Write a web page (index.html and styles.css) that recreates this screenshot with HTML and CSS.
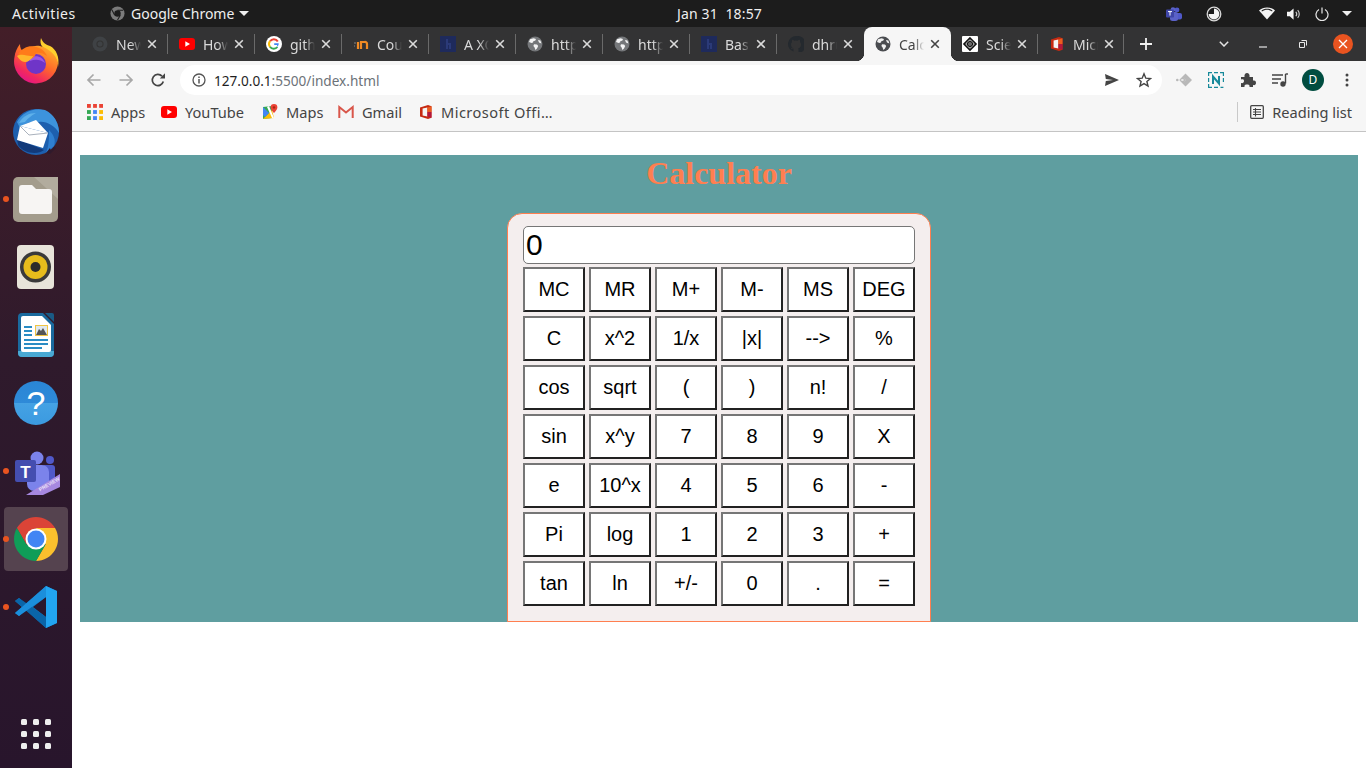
FILE: index.html
```html
<!DOCTYPE html>
<html lang="en">
<head>
<meta charset="utf-8">
<title>Calculator</title>
<link rel="stylesheet" href="styles.css">
</head>
<body>
<svg class="defs" width="0" height="0" aria-hidden="true">
  <defs>
    <symbol id="chrome" viewBox="0 0 48 48">
      <path fill="#db4437" d="M43.05 13A22 22 0 0 0 4.95 13L14.47 29.5 24 13Z"/>
      <path fill="#fbc02d" d="M24 46A22 22 0 0 0 43.05 13H24L33.53 29.5Z"/>
      <path fill="#0f9d58" d="M4.95 13A22 22 0 0 0 24 46L33.53 29.5H14.47Z"/>
      <circle cx="24" cy="24" r="10.5" fill="#fff"/>
      <circle cx="24" cy="24" r="8.5" fill="#4285f4"/>
    </symbol>
    <symbol id="globe" viewBox="0 0 16 16">
      <circle cx="8" cy="8" r="7.5" fill="currentColor"/>
      <path fill="#fff" fill-opacity=".92" d="M3 3.2 6.5 2.2 9 3 8.2 4.8 6.5 5 6 6.5 4.5 7 2 6ZM7 8.2 10 8.6 11.2 10 10 12.5 8.4 14 7.6 11.6 6.4 10ZM11 4 13.4 4.4 14.4 7.4 12 6.6Z"/>
    </symbol>
    <symbol id="yt" viewBox="0 0 16 12">
      <rect width="16" height="12" rx="3" fill="#f00"/>
      <path fill="#fff" d="M6.3 3.3 11 6 6.3 8.7Z"/>
    </symbol>
    <symbol id="office" viewBox="0 0 16 16">
      <path fill="#c62a12" d="M2 3.5 10 1 13.5 2.2V13.8L10 15 2 12.5Z"/>
      <path fill="#f5f5f5" d="M4.6 4.6 9.4 3.4V12.6L4.6 11.4Z"/>
      <path fill="#eb5c1f" d="M9.4 3.4 13.5 2.2V8H9.4Z"/>
      <path fill="#b3173c" d="M9.4 8H13.5V13.8L9.4 12.6Z"/>
    </symbol>
    <symbol id="hlogo" viewBox="0 0 16 16">
      <rect width="16" height="16" fill="#1e2a5c"/>
      <path fill="#2b3a78" d="M6 3H8V7H11V13H9V9H8V13H6Z"/>
    </symbol>
    <symbol id="x" viewBox="0 0 10 10">
      <path d="M1.2 1.2 8.8 8.8M8.8 1.2 1.2 8.8" fill="none" stroke="currentColor" stroke-width="1.6"/>
    </symbol>
  </defs>
</svg>

<header class="topbar">
  <div class="top-left">
    <span class="activities">Activities</span>
    <span class="app">
      <svg class="app-ico" viewBox="0 0 16 16"><circle cx="8" cy="8" r="7.5" fill="#7b7b7b"/><circle cx="8" cy="8" r="3.4" fill="#1c1c1c"/><path d="M8 4.6H14M5 9.8 2 4M11 9.8 8 15" stroke="#1c1c1c" stroke-width="1.1"/></svg>
      Google Chrome
      <i class="caret"></i>
    </span>
  </div>
  <div class="clock">Jan 31&nbsp;&nbsp;18:57</div>
  <div class="tray">
    <svg class="t-teams" viewBox="0 0 16 14"><circle cx="11" cy="3" r="2.4" fill="#5059c9"/><rect x="7" y="6" width="9" height="6.5" rx="2" fill="#5059c9"/><circle cx="7" cy="2.6" r="2.4" fill="#5b62c8"/><rect x="4" y="5" width="8" height="9" rx="2.5" fill="#5b62c8"/><rect y="2.5" width="8" height="8" rx="1" fill="#3f46a8"/><path d="M2 4.6H6M4 4.6V8.6" stroke="#fff"/></svg>
    <svg class="t-night" viewBox="0 0 16 16"><circle cx="8" cy="8" r="6.8" fill="none" stroke="#d8d8d8" stroke-width="1.3"/><path fill="#f4f4f4" d="M8 2.6A5.4 5.4 0 1 1 2.6 8H8Z"/></svg>
    <svg class="t-wifi" viewBox="0 0 16 13"><path fill="#f4f4f4" d="M8 12.6 0 3.4C4.4-.6 11.6-.6 16 3.4Z"/><path fill="#1c1c1c" d="M2.4 3.7C5.6 1.2 10.4 1.2 13.6 3.7L13 4.4C9.8 2.2 6.2 2.2 3 4.4Z"/></svg>
    <svg class="t-vol" viewBox="0 0 16 14"><path fill="#f4f4f4" d="M0 4.6H3L7 1V13L3 9.4H0Z"/><path d="M9.4 4.6C10.6 6 10.6 8 9.4 9.4M11.4 2.8C13.6 5 13.6 9 11.4 11.2" fill="none" stroke="#cfcfcf" stroke-width="1.2"/></svg>
    <svg class="t-pow" viewBox="0 0 14 14"><path d="M4 2.4A6 6 0 1 0 10 2.4M7 .4V6.4" fill="none" stroke="#e8e8e8" stroke-width="1.2"/></svg>
    <i class="caret"></i>
  </div>
</header>

<div class="desktop">
  <nav class="dock">
    <div class="slot">
      <svg class="ico up2" viewBox="0 0 48 48"><defs><linearGradient id="ffa" x1=".9" y1=".1" x2=".3" y2="1"><stop offset="0" stop-color="#ffb52a"/><stop offset=".45" stop-color="#ff6a2a"/><stop offset=".8" stop-color="#f2285f"/><stop offset="1" stop-color="#e31587"/></linearGradient></defs><path fill="#ffd02e" d="M29 1C27 8 31 11 36 14 42 18 46 23 46 30 48 20 44 12 38 9 34 8 31 6 29 1Z"/><path fill="url(#ffa)" d="M46 26A22 22 0 1 1 2.500 20C3 15 5 11 8 7 8 11 9 13 12 15 16 10 22 8 28 9 36 11 44 17 46 26Z"/><circle cx="24" cy="27" r="10" fill="#6f35c8"/><path fill="#9c59e6" d="M18 21C24 17 31 20 33 26 28 22 23 22 18 24Z"/><path fill="#ff7a1a" d="M6 17C11 10 18 8 24 10 29 11 33 14 35 19 31 16 27 15 24 16 23 20 20 22 16 23 12 23 9 20 6 17Z"/><path fill="#ffb62b" d="M5 19C11 16 16 20 21 19 19 23 16 25 13 25 10 25 7 22 5 19Z"/></svg>
    </div>
    <div class="slot">
      <svg class="ico" viewBox="0 0 48 48"><circle cx="24" cy="25" r="23" fill="#1d5fae"/><path fill="#3d93dc" d="M5 15C10 5 22 0 33 3 42 7 47 16 47 26 42 18 34 14 27 15 20 14 14 15 8 21Z"/><path fill="#5fb1ea" d="M7 16C11 9 17 6 24 6 19 9 16 11 13 15Z"/><path fill="#123a7a" d="M5 32 32 43C26 48 12 47 6 38Z"/><path fill="#fff" d="M8 19 36 26 31 41 5 33Z"/><path fill="#fff" d="M8 19 24 13 36 26Z"/><path d="M8 19 17 28 36 26" fill="none" stroke="#aab2bd"/><path fill="#2f7fd0" d="M37 23C42 28 44 33 42 39L34 46C37 39 37 32 37 23Z"/><path fill="#2f1a2c" d="M34 46 38 41 39 44 42 40 44 41 38 47Z"/></svg>
    </div>
    <div class="slot dot">
      <svg class="ico" viewBox="0 0 48 48"><rect x="1" y="2" width="45" height="45" rx="5" fill="#a39c8c"/><path fill="#b2ac9e" d="M22 2H46V24Z"/><path fill="#f7f5f3" d="M7 13a3 3 0 0 1 3-3H20L24 14H37a3 3 0 0 1 3 3V36a3 3 0 0 1-3 3H10a3 3 0 0 1-3-3Z"/></svg>
    </div>
    <div class="slot">
      <svg class="ico" viewBox="0 0 48 48"><rect x="5" y="2" width="37" height="44" rx="4" fill="#e8e4da"/><circle cx="23.500" cy="24" r="15.500" fill="#3a3a3a"/><circle cx="23.500" cy="24" r="12" fill="#e6bc1c"/><circle cx="23.500" cy="24" r="5" fill="#2b2b2b"/></svg>
    </div>
    <div class="slot">
      <svg class="ico" viewBox="0 0 48 48"><path fill="#1a6a9e" d="M6 6a4 4 0 0 1 4-4H31L42 13V42a4 4 0 0 1-4 4H10a4 4 0 0 1-4-4Z"/><path fill="#49a9d4" d="M6 40H42V42a4 4 0 0 1-4 4H10a4 4 0 0 1-4-4Z"/><path fill="#fff" d="M9 7a2 2 0 0 1 2-2H30L39 14V39a2 2 0 0 1-2 2H11a2 2 0 0 1-2-2Z"/><path fill="#1a5a85" d="M33 2H40a2 2 0 0 1 2 2V11Z"/><path d="M12 16H20M12 20H20M12 24H20M12 29H36M12 33H36M12 37H30" stroke="#2a8cc4" stroke-width="2"/><rect x="23" y="14" width="13" height="11" fill="#f0c542"/><rect x="24" y="15" width="11" height="9" fill="#dfe8ef"/><path fill="#555" d="M24 24 27 18 29 20 31 17 35 24Z"/></svg>
    </div>
    <div class="slot">
      <svg class="ico" viewBox="0 0 48 48"><defs><linearGradient id="hlp" x1="0" y1="0" x2="0" y2="1"><stop offset="0" stop-color="#2a86d6"/><stop offset=".5" stop-color="#2e8ad8"/><stop offset=".5" stop-color="#45a2e4"/><stop offset="1" stop-color="#3b9ae0"/></linearGradient></defs><circle cx="24" cy="24" r="22" fill="url(#hlp)"/><text x="24" y="36" class="help-q">?</text></svg>
    </div>
    <div class="slot dot">
      <svg class="ico" viewBox="0 0 48 48"><circle cx="25" cy="11" r="6.500" fill="#7b83eb"/><circle cx="38" cy="13" r="4" fill="#5059c9"/><rect x="30" y="18" width="13" height="20" rx="3" fill="#5059c9"/><rect x="15" y="18" width="22" height="26" rx="7" fill="#7b83eb"/><rect x="3" y="13" width="21" height="22" rx="2" fill="#444eb0"/><text x="13.500" y="31" class="teams-t">T</text><path fill="#a688e0" d="M14 48 48 27V40L31 48Z"/><text x="28" y="44.500" class="teams-p" transform="rotate(-30 28 44.500)">PREVIEW</text></svg>
    </div>
    <div class="slot dot active">
      <svg class="ico"><use href="#chrome"/></svg>
    </div>
    <div class="slot dot">
      <svg class="ico" viewBox="0 0 48 48"><path fill="#0f75bd" fill-rule="evenodd" d="M34 3 14 21 7 15 3 18 10 24 3 30 7 33 14 27 34 45 45 40V8ZM34 14V34L21 24Z"/><path fill="#0a65a8" d="M3 18 7 15 34 34V45Z"/><path fill="#1b8fdc" d="M3 30 7 33 34 14V3Z"/><path fill="#22a5f1" d="M34 3 45 8V40L34 45Z"/></svg>
    </div>
    <div class="apps-grid">
      <i></i><i></i><i></i><i></i><i></i><i></i><i></i><i></i><i></i>
    </div>
  </nav>

  <div class="browser">
    <div class="tabstrip">
      <div class="tab"><svg class="fav chrome-dark" viewBox="0 0 16 16"><circle cx="8" cy="8" r="7.500" fill="#3f4245"/><circle cx="8" cy="8" r="3.600" fill="#333"/><circle cx="8" cy="8" r="2.500" fill="#3f4245"/></svg><span class="tt">New Tab</span><svg class="tx"><use href="#x"/></svg></div>
      <div class="tab"><svg class="fav"><use href="#yt"/></svg><span class="tt">How to make</span><svg class="tx"><use href="#x"/></svg></div>
      <div class="tab"><svg class="fav" viewBox="0 0 16 16"><circle cx="8" cy="8" r="8" fill="#fff"/><path d="M11.800 5.400A4.600 4.600 0 0 0 4 5.200" fill="none" stroke="#ea4335" stroke-width="2"/><path d="M4 5.200A4.600 4.600 0 0 0 4 10.800" fill="none" stroke="#fbbc05" stroke-width="2"/><path d="M4 10.800A4.600 4.600 0 0 0 11.400 11" fill="none" stroke="#34a853" stroke-width="2"/><path d="M11.400 11A4.600 4.600 0 0 0 12.700 7.200H8.200V9H11" fill="#4285f4"/></svg><span class="tt">github</span><svg class="tx"><use href="#x"/></svg></div>
      <div class="tab"><svg class="fav" viewBox="0 0 16 16"><path d="M1 7H3M1 10H2" stroke="#6b6b6b" stroke-width="1.500"/><path d="M5 6V13M8 13V6H11.500A2 2 0 0 1 14 8V13" fill="none" stroke="#f08a24" stroke-width="2.200"/></svg><span class="tt">Course</span><svg class="tx"><use href="#x"/></svg></div>
      <div class="tab"><svg class="fav"><use href="#hlogo"/></svg><span class="tt">A XOR</span><svg class="tx"><use href="#x"/></svg></div>
      <div class="tab"><svg class="fav globe-dim"><use href="#globe"/></svg><span class="tt">https://</span><svg class="tx"><use href="#x"/></svg></div>
      <div class="tab"><svg class="fav globe-dim"><use href="#globe"/></svg><span class="tt">https://</span><svg class="tx"><use href="#x"/></svg></div>
      <div class="tab"><svg class="fav"><use href="#hlogo"/></svg><span class="tt">Basic</span><svg class="tx"><use href="#x"/></svg></div>
      <div class="tab last-before"><svg class="fav" viewBox="0 0 16 16"><path fill="#24292e" fill-rule="evenodd" d="M8 0a8 8 0 0 0-2.500 15.600V13C3 13.500 3 12 2.500 11.500 4 11.700 4.500 13 6 12.500 4 12 3 10.500 3 8.500c0-1 .3-1.800 1-2.500-.2-.6-.2-1.500.2-2.200 1 0 1.700.5 2.200 1a7 7 0 0 1 3.200 0c.5-.5 1.200-1 2.200-1 .4.7.4 1.600.2 2.200.7.700 1 1.500 1 2.500 0 2-1 3.500-3 4 .4.400.5 1 .5 1.500v3.100A8 8 0 0 0 8 0Z"/></svg><span class="tt">dhruv</span><svg class="tx"><use href="#x"/></svg></div>
      <div class="tab active"><svg class="fav globe-on"><use href="#globe"/></svg><span class="tt">Calculator</span><svg class="tx"><use href="#x"/></svg></div>
      <div class="tab"><svg class="fav" viewBox="0 0 16 16"><rect width="16" height="16" rx="1" fill="#fff"/><path d="M8 2 14 8 8 14 2 8Z" fill="none" stroke="#111" stroke-width="1.600"/><circle cx="8" cy="8" r="2.400" fill="none" stroke="#111" stroke-width="1.300"/><path d="M8 2V14M2 8H14" stroke="#111" stroke-width=".8"/></svg><span class="tt">Scientific</span><svg class="tx"><use href="#x"/></svg></div>
      <div class="tab mic"><svg class="fav"><use href="#office"/></svg><span class="tt">Microsoft</span><svg class="tx"><use href="#x"/></svg></div>
      <svg class="plus" viewBox="0 0 12 12"><path d="M6 0V12M0 6H12" stroke="#f1f1f1" stroke-width="1.800"/></svg>
      <svg class="chev" viewBox="0 0 10 6"><path d="M.8.8 5 5 9.200.8" fill="none" stroke="#e4e4e4" stroke-width="1.500"/></svg>
      <svg class="wmin" viewBox="0 0 8 2"><path d="M0 1H8" stroke="#e8e8e8" stroke-width="1.200"/></svg>
      <svg class="wres" viewBox="0 0 8 8"><path d="M2.500 .5H7.500V5.500M.5 2.500H5.500V7.500H.5Z" fill="none" stroke="#e8e8e8"/></svg>
      <div class="wclose"><svg viewBox="0 0 10 10"><path d="M1 1 9 9M9 1 1 9" stroke="#fff" stroke-width="1.300"/></svg></div>
    </div>

    <div class="toolbar">
      <svg class="nav nav-back" viewBox="0 0 16 16"><path d="M14.500 8H2M7.500 2.500 2 8l5.500 5.500" fill="none" stroke="#a8a8a8" stroke-width="1.700"/></svg>
      <svg class="nav nav-fwd" viewBox="0 0 16 16"><path d="M1.500 8H14M8.500 2.500 14 8l-5.500 5.500" fill="none" stroke="#a8a8a8" stroke-width="1.700"/></svg>
      <svg class="nav nav-rel" viewBox="0 0 16 16"><path d="M13.300 9.500A5.600 5.600 0 1 1 12 4.200" fill="none" stroke="#444" stroke-width="1.700"/><path fill="#444" d="M9.800 6.500H15V1.200Z"/></svg>
      <div class="omni">
        <svg class="info" viewBox="0 0 14 14"><circle cx="7" cy="7" r="6" fill="none" stroke="#555" stroke-width="1.300"/><path d="M7 6V10.400M7 3.400V5" stroke="#555" stroke-width="1.500"/></svg>
        <span class="url">127.0.0.1<span class="url-dim">:5500/index.html</span></span>
        <svg class="send" viewBox="0 0 14 12"><path fill="#444" d="M0 0 14 6 0 12 .8 7 8 6 .8 5Z"/></svg>
        <svg class="star" viewBox="0 0 16 16"><path d="M8 1.800 9.800 6.200 14.500 6.500 10.900 9.500 12 14.100 8 11.600 4 14.100 5.100 9.500 1.500 6.500 6.200 6.200Z" fill="none" stroke="#444" stroke-width="1.400"/></svg>
      </div>
      <svg class="ext ext1" viewBox="0 0 16 16"><path fill="#b8b8b8" d="M9.500 1.500 16 8 9.500 14.500 3.800 8.800H7.500V7.200H3.800Z"/><path fill="#f6f6f6" d="M7 5.200 10 8 7 10.800 9.800 8Z"/><circle cx="1.300" cy="8" r="1.300" fill="#b8b8b8"/><circle cx="4.500" cy="8" r="1" fill="#b8b8b8"/></svg>
      <svg class="ext ext2" viewBox="0 0 16 16"><path d="M.6 4V.6H4M6 .6H10M12 .6H15.400V4M15.400 6V10M.6 6V10M.6 12V15.400H4M6 15.400H10M12.500 15.400H15.400" fill="none" stroke="#17899a" stroke-width="1.200"/><path d="M5 12V4.500L11 11.500V4" fill="none" stroke="#17899a" stroke-width="2"/></svg>
      <svg class="ext ext3" viewBox="0 0 16 16"><path fill="#444" d="M1 5H4.500C4 2.500 5.500 1 7 1S10 2.500 9.500 5H13V8.500C15.500 8 16 9.500 16 11S15 13.500 13 13V15H9.500C10 13 8.500 12.500 7 12.500S4 13 4.500 15H1V11C3 11.500 4 10.500 4 9S3 6.800 1 7.500Z"/></svg>
      <svg class="ext ext4" viewBox="0 0 16 14"><path d="M0 2H11M0 6H9M0 10H6" stroke="#444" stroke-width="1.400"/><path d="M13.500 1V10.500" stroke="#444" stroke-width="1.400"/><path d="M13.500 1H16" stroke="#444" stroke-width="1.400"/><circle cx="11" cy="11" r="2.700" fill="#444"/></svg>
      <div class="avatar">D</div>
      <svg class="menu" viewBox="0 0 4 14"><circle cx="2" cy="2" r="1.500" fill="#444"/><circle cx="2" cy="7" r="1.500" fill="#444"/><circle cx="2" cy="12" r="1.500" fill="#444"/></svg>
    </div>

    <div class="bookmarks">
      <div class="bm bm-apps"><svg class="bm-ico" viewBox="0 0 15 15"><rect width="3.600" height="3.600" fill="#ea4335"/><rect x="5.700" width="3.600" height="3.600" fill="#ea4335"/><rect x="11.400" width="3.600" height="3.600" fill="#ea4335"/><rect y="5.700" width="3.600" height="3.600" fill="#34a853"/><rect x="5.700" y="5.700" width="3.600" height="3.600" fill="#4285f4"/><rect x="11.400" y="5.700" width="3.600" height="3.600" fill="#fbbc05"/><rect y="11.400" width="3.600" height="3.600" fill="#34a853"/><rect x="5.700" y="11.400" width="3.600" height="3.600" fill="#4285f4"/><rect x="11.400" y="11.400" width="3.600" height="3.600" fill="#fbbc05"/></svg>Apps</div>
      <div class="bm bm-yt"><svg class="bm-ico"><use href="#yt"/></svg>YouTube</div>
      <div class="bm bm-maps"><svg class="bm-ico" viewBox="0 0 16 16"><path fill="#34a853" d="M1 3 10 2V14L1 15Z"/><path fill="#fbbc05" d="M1 15 10 6 12 14Z"/><path fill="#4285f4" d="M1 3 7 9 3 13 1 11Z"/><path fill="#fff" d="M5 3 7 2 12 14H10Z"/><path fill="#ea4335" d="M12 0A3.400 3.400 0 0 1 15.400 3.400C15.400 5.500 13 7.500 12 9 11 7.500 8.600 5.500 8.600 3.400A3.400 3.400 0 0 1 12 0Z"/><circle cx="12" cy="3.400" r="1.200" fill="#a52714"/></svg>Maps</div>
      <div class="bm bm-gmail"><svg class="bm-ico" viewBox="0 0 16 14"><path d="M1.300 13V2L8 7.500 14.700 2V13" fill="none" stroke="#d9564a" stroke-width="2"/></svg>Gmail</div>
      <div class="bm bm-off"><svg class="bm-ico"><use href="#office"/></svg>Microsoft Offi…</div>
      <div class="rl"><svg class="rl-ico" viewBox="0 0 14 14"><rect x=".7" y=".7" width="12.600" height="12.600" rx="1" fill="none" stroke="#444" stroke-width="1.300"/><path d="M3 4.500H11M3 7H11M3 9.500H11M5.500 3V11.500" stroke="#444" stroke-width="1.100"/></svg>Reading list</div>
    </div>

    <main class="page">
      <section class="stage">
        <h1 class="title">Calculator</h1>
        <div class="calc">
          <input class="display" type="text" value="0" readonly>
          <div class="keys">
            <button>MC</button><button>MR</button><button>M+</button><button>M-</button><button>MS</button><button>DEG</button>
            <button>C</button><button>x^2</button><button>1/x</button><button>|x|</button><button>--&gt;</button><button>%</button>
            <button>cos</button><button>sqrt</button><button>(</button><button>)</button><button>n!</button><button>/</button>
            <button>sin</button><button>x^y</button><button>7</button><button>8</button><button>9</button><button>X</button>
            <button>e</button><button>10^x</button><button>4</button><button>5</button><button>6</button><button>-</button>
            <button>Pi</button><button>log</button><button>1</button><button>2</button><button>3</button><button>+</button>
            <button>tan</button><button>ln</button><button>+/-</button><button>0</button><button>.</button><button>=</button>
          </div>
        </div>
      </section>
    </main>
  </div>
</div>
</body>
</html>
```

FILE: styles.css
```css
* { box-sizing: border-box; }
html, body { margin: 0; padding: 0; }
body {
  width: 1366px;
  height: 768px;
  overflow: hidden;
  display: flex;
  flex-direction: column;
  font-family: "Noto Sans", sans-serif;
  background: #fff;
}
.defs { position: absolute; }
svg { display: block; flex: none; }

/* top bar */
.topbar {
  height: 27px;
  flex: none;
  background: #1c1c1c;
  color: #efefef;
  font-size: 14px;
  display: grid;
  grid-template-columns: 677px auto 1fr;
  align-items: center;
}
.top-left { display: flex; align-items: center; padding-left: 12px; }
.activities { width: 98px; letter-spacing: .55px; }
.app { display: flex; align-items: center; }
.app-ico { width: 15px; height: 15px; margin-right: 6px; }
.caret {
  display: block;
  width: 0; height: 0;
  border-left: 5px solid transparent;
  border-right: 5px solid transparent;
  border-top: 5px solid #efefef;
}
.app .caret { margin-left: 5px; }
.clock { letter-spacing: .15px; }
.tray { display: flex; align-items: center; justify-content: flex-end; padding-right: 14px; }
.t-teams { width: 16px; height: 14px; margin-right: 24px; }
.t-night { width: 16px; height: 16px; margin-right: 37px; }
.t-wifi { width: 16px; height: 13px; margin-right: 12px; }
.t-vol { width: 15px; height: 14px; margin-right: 13px; }
.t-pow { width: 14px; height: 14px; margin-right: 13px; }

.desktop { flex: 1; display: flex; min-height: 0; }

/* dock */
.dock {
  width: 72px;
  flex: none;
  padding-top: 2px;
  display: flex;
  flex-direction: column;
  align-items: center;
  background: linear-gradient(180deg, #431e28 0%, #2f1a2c 45%, #28152c 100%);
}
.slot {
  position: relative;
  width: 64px;
  height: 68px;
  display: flex;
  align-items: center;
  justify-content: center;
  flex: none;
}
.slot.active::before {
  content: "";
  position: absolute;
  inset: 2px 0;
  background: #55434f;
  border-radius: 4px;
}
.slot.dot::after {
  content: "";
  position: absolute;
  left: -1px;
  top: 31px;
  width: 6px;
  height: 6px;
  border-radius: 50%;
  background: #e95420;
}
.ico { width: 48px; height: 48px; position: relative; }
.up2 { margin-top: -4px; }
.help-q { font: 400 34px "Liberation Sans", sans-serif; fill: #fff; text-anchor: middle; }
.teams-t { font: 700 17px "Liberation Sans", sans-serif; fill: #fff; text-anchor: middle; }
.teams-p { font: 700 5px "Liberation Sans", sans-serif; fill: #e9e2f8; }
.apps-grid {
  margin-top: auto;
  margin-bottom: 19px;
  display: grid;
  grid-template-columns: repeat(3, 6px);
  grid-auto-rows: 6px;
  gap: 6px;
}
.apps-grid i { background: #eee; border-radius: 1.500px; }

/* browser */
.browser { flex: 1; min-width: 0; display: flex; flex-direction: column; background: #fff; }
.tabstrip {
  height: 34px;
  flex: none;
  background: #333334;
  display: flex;
  align-items: center;
  padding-left: 9px;
}
.tab {
  position: relative;
  width: 87px;
  height: 34px;
  flex: none;
  display: flex;
  align-items: center;
  padding-left: 11px;
  color: #dadada;
  font-size: 14px;
}
.tab::after {
  content: "";
  position: absolute;
  right: 0;
  top: 7px;
  height: 20px;
  width: 1px;
  background: #6a6a6a;
}
.tab.mic { width: 86px; }
.tab.last-before::after { display: none; }
.tab.active {
  background: #f6f6f6;
  color: #444;
  border-radius: 8px 8px 0 0;
}
.tab.active::after {
  right: -8px;
  top: auto;
  bottom: 0;
  width: 8px;
  height: 8px;
  background: radial-gradient(circle at 100% 0, #333334 8px, #f6f6f6 8.500px);
}
.tab.active::before {
  content: "";
  position: absolute;
  left: -8px;
  bottom: 0;
  width: 8px;
  height: 8px;
  background: radial-gradient(circle at 0 0, #333334 8px, #f6f6f6 8.500px);
}
.fav { width: 16px; height: 16px; margin-right: 8px; }
.globe-dim { color: #75777a; }
.globe-on { color: #4a4c50; }
.tt {
  width: 25px;
  overflow: hidden;
  white-space: nowrap;
  -webkit-mask-image: linear-gradient(90deg, #000 60%, transparent 100%);
  mask-image: linear-gradient(90deg, #000 60%, transparent 100%);
}
.tx { width: 10px; height: 10px; margin-left: 6px; }
.plus { width: 12px; height: 12px; margin-left: 16px; }
.chev { width: 10px; height: 6px; margin-left: 67px; }
.wmin { width: 8px; height: 2px; margin: 6px 0 0 30px; }
.wres { width: 8px; height: 8px; margin-left: 32px; }
.wclose {
  width: 20px; height: 20px;
  margin-left: 26px;
  border-radius: 50%;
  background: #e95420;
  display: flex;
  align-items: center;
  justify-content: center;
}
.wclose svg { width: 10px; height: 10px; }

/* toolbar */
.toolbar {
  height: 34px;
  flex: none;
  background: #f6f6f6;
  display: flex;
  align-items: flex-start;
  padding-left: 14px;
}
.nav { width: 16px; height: 16px; margin-top: 11px; }
.nav-fwd { margin-left: 16px; }
.nav-rel { margin-left: 16px; }
.omni {
  margin: 4px 0 0 14px;
  width: 982px;
  height: 30px;
  background: #fff;
  border-radius: 15px;
  display: flex;
  align-items: center;
  padding-left: 12px;
  font-size: 13.6px;
}
.info { width: 14px; height: 14px; margin-right: 8px; }
.url { color: #1f1f1f; width: 690px; white-space: nowrap; }
.url-dim { color: #6c7278; }
.send { width: 14px; height: 12px; margin-left: 201px; }
.star { width: 16px; height: 16px; margin-left: 17px; }
.ext { width: 16px; height: 16px; margin-top: 11px; }
.ext1 { margin-left: 14px; }
.ext2 { margin-left: 16px; }
.ext3 { margin-left: 16px; }
.ext4 { margin-left: 16px; height: 14px; margin-top: 12px; }
.avatar {
  width: 22px; height: 22px;
  margin: 8px 0 0 14px;
  border-radius: 50%;
  background: #004d40;
  color: #fff;
  font-size: 12px;
  line-height: 22px;
  text-align: center;
}
.menu { width: 4px; height: 14px; margin: 12px 0 0 21px; }

/* bookmarks */
.bookmarks {
  height: 37px;
  flex: none;
  background: #f6f6f6;
  border-bottom: 1px solid #c4c4c4;
  display: flex;
  align-items: center;
  padding: 0 0 2px 15px;
  color: #444;
  font-size: 14.6px;
}
.bm { display: flex; align-items: center; white-space: nowrap; }
.bm-ico { width: 16px; height: 16px; margin-right: 8px; }
.bm-apps { width: 74px; }
.bm-yt { width: 101px; }
.bm-maps { width: 76px; }
.bm-gmail { width: 80px; }
.bm-off { width: 150px; letter-spacing: .45px; }
.bm-off .bm-ico { margin-right: 7px; }
.rl {
  margin-left: auto;
  padding: 0 14px 0 12px;
  display: flex;
  align-items: center;
  height: 20px;
  border-left: 1px solid #c9c9c9;
}
.rl-ico { width: 14px; height: 14px; margin-right: 8px; }

/* page */
.page { flex: 1; padding: 23px 8px 0; background: #fff; min-height: 0; }
.stage {
  height: 467px;
  background: #5f9ea0;
  display: flex;
  flex-direction: column;
  align-items: center;
}
.title {
  margin: 0 0 21px;
  height: 37px;
  font: 700 32px/37px "Liberation Serif", serif;
  color: #ff7f50;
}
.calc {
  width: 424px;
  height: 409px;
  background: #f4eeee;
  border: 1px solid #ff7f50;
  border-radius: 15px 15px 0 0;
  padding: 12px 15px 0;
  font-family: "Liberation Sans", sans-serif;
}
.display {
  display: block;
  width: 392px;
  height: 38px;
  padding: 0 2px;
  border: 1px solid #767676;
  border-radius: 5px;
  background: #fff;
  color: #000;
  font: 30px "Liberation Sans", sans-serif;
  outline: none;
}
.keys {
  margin-top: 3px;
  display: grid;
  grid-template-columns: repeat(6, 62px);
  grid-auto-rows: 45px;
  gap: 4px;
}
.keys button {
  padding: 0;
  background: #fff;
  color: #000;
  border-width: 2px;
  border-style: solid;
  border-color: #767676 #212121 #212121 #767676;
  font: 20px "Liberation Sans", sans-serif;
}
```
